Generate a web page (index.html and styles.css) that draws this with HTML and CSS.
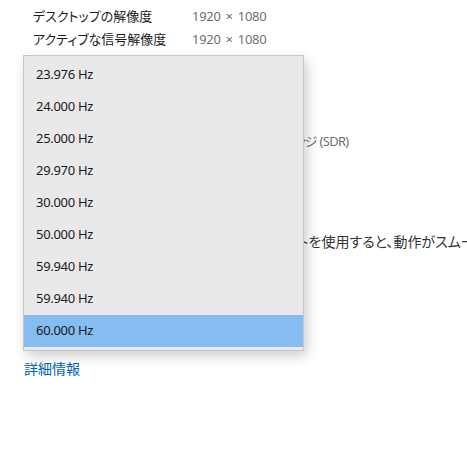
FILE: index.html
```html
<!doctype html>
<html>
<head>
	<meta charset='utf-8'>
	<title>ディスプレイの詳細設定</title>
	<link rel="stylesheet" href="styles.css">
</head>
<body>
<div class='page'>
	<dl class='info'>
		<dt>デスクトップの解像度</dt><dd>1920 × 1080</dd>
		<dt>アクティブな信号解像度</dt><dd>1920 × 1080</dd>
		<dt>リフレッシュ レート (Hz)</dt><dd>60.000 Hz</dd>
		<dt>ビット深度</dt><dd>8 ビット</dd>
		<dt>色形式</dt><dd>RGB</dd>
		<dt class='last'>色空間</dt><dd class='last'>標準ダイナミック レンジ (SDR)</dd>
	</dl>

	<h3 class='sub'>リフレッシュ レート</h3>
	<p class='desc'>リフレッシュ レートを選択します。より高いレートを使用すると、動作がスムーズになります。</p>

	<a class='more'>詳細情報</a>

	<ul class='flyout'>
		<li>23.976 Hz</li>
		<li>24.000 Hz</li>
		<li>25.000 Hz</li>
		<li>29.970 Hz</li>
		<li>30.000 Hz</li>
		<li>50.000 Hz</li>
		<li>59.940 Hz</li>
		<li>59.940 Hz</li>
		<li class='cur'>60.000 Hz</li>
	</ul>
</div>
</body>
</html>
```

FILE: styles.css
```css
*{margin:0;padding:0;}
html,body{background:#fff;}
body{font-family:"Noto Sans","Noto Sans CJK JP",sans-serif;font-size:13px;color:#1a1a1a;font-feature-settings:"palt";}

.page{position:relative;width:467px;height:467px;overflow:hidden;}

.info{display:grid;grid-template-columns:159px 1fr;grid-auto-rows:23px;line-height:23px;padding:5px 0 0 33px;}
.info dt{font-size:13px;white-space:nowrap;}
.info dd{color:#707070;letter-spacing:-0.3px;word-spacing:2px;white-space:nowrap;}
.info .last{margin-top:10px;}
.info dd.last{letter-spacing:-0.7px;word-spacing:0;}

.sub{font-size:15px;font-weight:normal;padding:24px 0 0 25px;line-height:24px;}
.desc{font-size:14px;color:#333;padding:41px 0 0 25px;line-height:20px;white-space:nowrap;}

.more{display:block;color:#0063b1;font-size:14px;padding:107px 0 0 24px;line-height:20px;cursor:pointer;}

.flyout{list-style:none;position:absolute;left:23px;top:55px;width:279px;padding:3px 0 3px;background:#e9e9e9;border:1px solid #c6c6c6;box-shadow:3px 5px 12px rgba(0,0,0,0.2);}
.flyout li{height:32px;line-height:30px;padding-left:12px;letter-spacing:-0.3px;color:#1a1a1a;}
.flyout li.cur{background:#85bdf0;}
```
